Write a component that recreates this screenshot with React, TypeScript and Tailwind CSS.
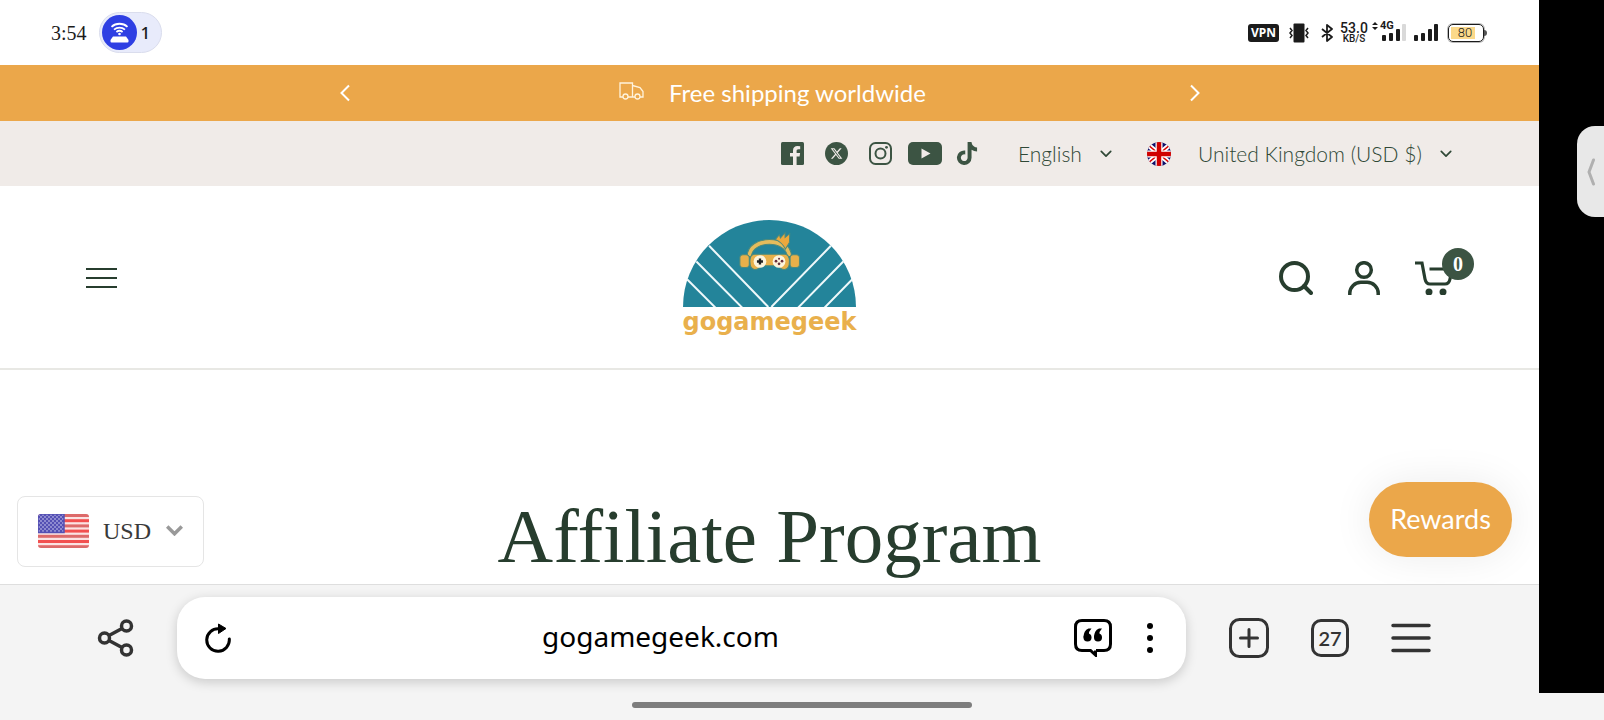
import { ReactNode } from "react";
import { FaTiktok, FaXTwitter } from "react-icons/fa6";

const BODY_FONT = "font-['Lato','Open_Sans',sans-serif]";

function Chevron({ className }: { className: string }) {
  return (
    <svg viewBox="0 0 14 9" className={className} fill="none" stroke="currentColor" strokeWidth="2">
      <path d="M1.5 1.5 7 7l5.5-5.5" strokeLinecap="round" strokeLinejoin="round" />
    </svg>
  );
}

function SignalBars({ weak }: { weak?: boolean }) {
  return (
    <svg viewBox="0 0 24 17" className="h-[17px] w-6" fill="#1b1b1b">
      <rect x="0" y="11" width="4" height="6" rx="1" />
      <rect x="7" y="9" width="4" height="8" rx="1" />
      <rect x="14" y="5" width="4" height="12" rx="1" />
      <rect x="20" y="0" width="4" height="17" rx="1" fill={weak ? "#d9d9d9" : "#1b1b1b"} />
    </svg>
  );
}

function StatusBar() {
  return (
    <div className="flex h-[65px] items-center justify-between bg-white pr-[52px] pl-[51px] text-[#1b1b1b]">
      <div className="flex items-center gap-3">
        <time className="font-['Liberation_Serif',serif] text-[20px] leading-6">3:54</time>
        <div className="flex h-[41px] w-[63px] items-center gap-1 rounded-full border border-[#dadded] bg-[#e8ebfb] pl-0.5 font-['Noto_Sans',sans-serif] text-[17px] font-medium">
          <svg viewBox="0 0 35 35" className="h-[35px] w-[35px]" fill="none">
            <circle cx="17.5" cy="17.5" r="17.5" fill="#2e3fe3" />
            <path d="M9.5 11.8a12 12 0 0 1 16 0M12 14.6a8.5 8.5 0 0 1 11 0M14.4 17a5 5 0 0 1 6.2 0" stroke="#fff" strokeWidth="1.8" />
            <circle cx="17.5" cy="19" r="1.3" fill="#fff" />
            <path d="M11 21.5h13l2.5 3.5v1.5q0 1-1 1h-16q-1 0-1-1V25z" fill="#fff" />
          </svg>
          <span>1</span>
        </div>
      </div>

      <div className="flex items-center">
        <span className="flex h-[18px] w-[31px] items-center justify-center rounded-[3px] bg-[#1b1b1b] font-['Noto_Sans',sans-serif] text-[12px] font-bold text-white">
          VPN
        </span>
        <svg viewBox="0 0 20 20" className="ml-2.5 h-5 w-5" fill="none" stroke="#1b1b1b" strokeWidth="1.5">
          <rect x="4.5" y="0.5" width="11" height="19" rx="1" fill="#1b1b1b" stroke="none" />
          <path d="m1 5 2 2.5L1 10l2 2.5L1 15M19 5l-2 2.5 2 2.5-2 2.5 2 2.5" />
        </svg>
        <svg viewBox="0 0 12 18" className="ml-3 h-[18px] w-3" fill="none" stroke="#1b1b1b" strokeWidth="1.8">
          <path d="m1 5 10 8-5 4V1l5 4L1 13" strokeLinejoin="round" />
        </svg>
        <div className="ml-[7px] flex w-7 flex-col items-center font-['Roboto',sans-serif] font-medium">
          <span className="text-[14px] leading-3">53.0</span>
          <span className="text-[10px] leading-[9px]">KB/S</span>
        </div>
        <div className="relative ml-3.5">
          <SignalBars weak />
          <span className="absolute -top-1 -left-2.5 flex items-center gap-0.5 font-['Roboto',sans-serif] text-[11px] leading-3 font-bold">
            <svg viewBox="0 0 6 8" className="h-2 w-1.5" fill="#1b1b1b">
              <path d="m3 0 3 3H0zM3 8l3-3H0z" />
            </svg>
            4G
          </span>
        </div>
        <div className="ml-2">
          <SignalBars />
        </div>
        <div className="ml-2.5 flex items-center">
          <span className="flex h-[18px] w-9 rounded-[5px] border border-[#1b1b1b] p-[2px] ring-1 ring-[#1b1b1b]/30">
            <span className="flex w-6 items-center justify-center bg-[#fbd98a] font-['Roboto',sans-serif] text-[13px] leading-3 font-light">
              <span className="pl-1">80</span>
            </span>
          </span>
          <span className="h-1.5 w-[3px] rounded-r-sm bg-[#555]" />
        </div>
      </div>
    </div>
  );
}

function Announcement() {
  return (
    <div className="flex h-14 items-center justify-center bg-[#eba74a] px-4 text-white">
      <div className="flex w-full max-w-[866px] items-center justify-between">
        <button aria-label="Previous" className="p-0.5">
          <svg viewBox="0 0 12 18" className="h-[18px] w-3" fill="none" stroke="currentColor" strokeWidth="2">
            <path d="M10 1.5 2.5 9l7.5 7.5" />
          </svg>
        </button>
        <div className="flex items-center gap-[25px] pl-1.5">
          <svg viewBox="0 0 25 18" className="-mt-1 h-[18px] w-[25px]" fill="none" stroke="#fff3dc" strokeWidth="1.3">
            <path d="M4 15H1V1h12.5v14H9M13.5 3.5l7.5 2 3 4V15h-3M13.5 15H16" />
            <circle cx="6.5" cy="14.5" r="2.5" />
            <circle cx="18.5" cy="14.5" r="2.5" />
          </svg>
          <p className={`text-[24px] leading-8 ${BODY_FONT}`}>Free shipping worldwide</p>
        </div>
        <button aria-label="Next" className="p-0.5">
          <svg viewBox="0 0 12 18" className="h-[18px] w-3" fill="none" stroke="currentColor" strokeWidth="2">
            <path d="M2 1.5 9.5 9 2 16.5" />
          </svg>
        </button>
      </div>
    </div>
  );
}

function SocialLink({ label, children }: { label: string; children: ReactNode }) {
  return (
    <a href="#" aria-label={label} className="block">
      {children}
    </a>
  );
}

function UtilityBar() {
  return (
    <div className={`flex h-[65px] items-center justify-end bg-[#f0ebe8] pr-[87px] text-[21px] text-[#2f4836] ${BODY_FONT}`}>
      <div className="flex items-center text-[#3c5443]">
        <SocialLink label="Facebook">
          <svg viewBox="0 0 23 23" className="h-[23px] w-[23px]" fill="currentColor">
            <rect width="23" height="23" rx="1.5" />
            <path d="M12 23v-8.500H9V11h3V8.500C12 5.500 13.700 4 16.500 4l2.700.2v3h-1.700c-1.500 0-1.900.7-1.900 1.800v2h3.500l-.5 3.500h-3V23z" fill="#f0ebe8" />
          </svg>
        </SocialLink>
        <span className="ml-[21px] flex">
          <SocialLink label="X">
            <span className="flex h-[23px] w-[23px] items-center justify-center rounded-full bg-[#3c5443] text-[#f0ebe8]">
              <FaXTwitter className="h-[13px] w-[13px]" />
            </span>
          </SocialLink>
        </span>
        <span className="ml-[21px] flex">
          <SocialLink label="Instagram">
            <svg viewBox="0 0 23 23" className="h-[23px] w-[23px]" fill="none" stroke="currentColor" strokeWidth="2">
              <rect x="1" y="1" width="21" height="21" rx="5.5" />
              <circle cx="11.5" cy="11.5" r="5" />
              <circle cx="17.5" cy="5.3" r="1.4" fill="currentColor" stroke="none" />
            </svg>
          </SocialLink>
        </span>
        <span className="ml-4 flex">
          <SocialLink label="YouTube">
            <svg viewBox="0 0 34 23" className="h-[23px] w-[34px]" fill="currentColor">
              <rect width="34" height="23" rx="5" />
              <path d="m13.500 6.500 9 5-9 5z" fill="#f0ebe8" />
            </svg>
          </SocialLink>
        </span>
        <span className="ml-3.5 flex">
          <SocialLink label="TikTok">
            <FaTiktok className="h-[23px] w-[22px]" />
          </SocialLink>
        </span>
      </div>

      <div className="relative ml-10 flex items-center">
        <select aria-label="Language" className="appearance-none bg-transparent pr-[30px] font-light">
          <option>English</option>
        </select>
        <Chevron className="pointer-events-none absolute right-0 h-2 w-3" />
      </div>

      <div className="relative ml-[35px] flex items-center gap-[27px]">
        <svg viewBox="0 0 24 24" className="h-6 w-6">
          <clipPath id="uk-round">
            <circle cx="12" cy="12" r="12" />
          </clipPath>
          <g clipPath="url(#uk-round)">
            <rect width="24" height="24" fill="#10106a" />
            <path d="M0 2 24 22M24 2 0 22" stroke="#fff" strokeWidth="5" />
            <path d="M0 2 24 22M24 2 0 22" stroke="#d80000" strokeWidth="1.5" />
            <path d="M12 0v24M0 12h24" stroke="#fff" strokeWidth="7" />
            <path d="M12 0v24M0 12h24" stroke="#d00000" strokeWidth="4.5" />
          </g>
        </svg>
        <select aria-label="Country" className="appearance-none bg-transparent pr-[30px] font-light">
          <option>United Kingdom (USD $)</option>
        </select>
        <Chevron className="pointer-events-none absolute right-0 h-2 w-3" />
      </div>
    </div>
  );
}

function Logo() {
  return (
    <a href="#" className="flex flex-col items-center">
      <svg viewBox="70 60 517 260" className="h-[87px] w-[173px]" aria-hidden="true">
        <path d="M70 320a258.500 260 0 0 1 517 0z" fill="#23849a" />
        <path
          d="M148 137 325 320M512 137 334 320M110 184l137 138M82 237l85 85M549 184 414 322M576 237l-83 85"
          fill="none"
          stroke="#eef8fa"
          strokeWidth="6"
        />
        <g stroke="#4c8a7c" strokeWidth="3">
          <path d="M262 168c0-66 132-66 132 0l-12 2c-4-50-104-50-108 0z" fill="#e5bc5c" />
          <path d="m346 118 12-14 3 10 14-16v14l14-11-1 26-12 20q-10-20-30-29z" fill="#eca83c" />
          <rect x="240" y="164" width="28" height="38" rx="9" fill="#e8b04a" />
          <rect x="390" y="164" width="28" height="38" rx="9" fill="#e8b04a" />
          <path d="M284 162h90q14 0 14 22t-14 24q-14 0-20-11h-50q-6 11-20 11-14-2-14-24t14-22z" fill="#e8b04a" />
        </g>
        <circle cx="300" cy="184" r="19" fill="#fdf4dc" />
        <circle cx="357" cy="184" r="19" fill="#fdf4dc" />
        <path d="M291 184h18M300 175v18" stroke="#222" strokeWidth="7" />
        <g fill="#6b2f3c">
          <circle cx="348" cy="183" r="4" />
          <circle cx="366" cy="183" r="4" />
          <circle cx="357" cy="191" r="4" />
          <circle cx="357" cy="176" r="3" />
        </g>
      </svg>
      <span className="font-['DejaVu_Sans',sans-serif] text-[24px] leading-[30px] font-bold text-[#e9b04c]">gogamegeek</span>
    </a>
  );
}

function Header() {
  return (
    <header className="grid h-[184px] grid-cols-[1fr_auto_1fr] items-center border-b-2 border-[#e8e8e4] bg-white px-[86px] pt-0.5 text-[#273d2e]">
      <button aria-label="Menu" className="justify-self-start">
        <svg viewBox="0 0 31 20" className="h-5 w-[31px]" stroke="currentColor" strokeWidth="2">
          <path d="M0 1h31M0 10h31M0 19h31" />
        </svg>
      </button>
      <Logo />
      <div className="flex items-center gap-[35px] justify-self-end">
        <button aria-label="Search">
          <svg viewBox="0 0 34 34" className="h-[34px] w-[34px]" fill="none" stroke="currentColor" strokeWidth="4">
            <circle cx="15.5" cy="15.5" r="13.5" />
            <path d="m25 25 7 7" strokeLinecap="round" />
          </svg>
        </button>
        <a href="#" aria-label="Account">
          <svg viewBox="0 0 32 34" className="h-[34px] w-8" fill="none" stroke="currentColor" strokeWidth="3.5">
            <circle cx="16" cy="9" r="7.3" />
            <path d="M1.800 34v-2a11 11 0 0 1 11-10.700h6.400a11 11 0 0 1 11 10.700v2" />
          </svg>
        </a>
        <a href="#" aria-label="Cart" className="relative">
          <svg viewBox="0 0 38 34" className="h-[34px] w-[38px]" fill="none" stroke="currentColor" strokeWidth="3.2">
            <path d="M0 2h7l3 16q1 5 5 5h15q4 0 5-5l2-10H14.500" />
            <circle cx="14" cy="31" r="3.5" fill="currentColor" stroke="none" />
            <circle cx="28" cy="31" r="3.5" fill="currentColor" stroke="none" />
          </svg>
          <span className="absolute -top-[13px] -right-[21px] flex h-8 w-8 items-center justify-center rounded-full bg-[#3c5443] font-['Liberation_Serif',serif] text-[20px] font-bold text-white">
            0
          </span>
        </a>
      </div>
    </header>
  );
}

function CurrencyWidget() {
  const stripes = [0, 1, 2, 3, 4, 5, 6];
  return (
    <div className="absolute bottom-[17px] left-[17px] flex h-[71px] w-[187px] items-center rounded-lg border border-[#e5e5e5] bg-white pb-0.5 pl-5">
      <svg viewBox="0 0 51 34" className="h-[34px] w-[51px]">
        <clipPath id="us-flag">
          <rect width="51" height="34" rx="3" />
        </clipPath>
        <g clipPath="url(#us-flag)">
          <rect width="51" height="34" fill="#fbe3e3" />
          {stripes.map((i) => (
            <rect key={i} y={i * 5.2} width="51" height="3" fill={i % 2 ? "#f25050" : "#dd6a6a"} />
          ))}
          <pattern id="us-stars" width="4" height="4" patternUnits="userSpaceOnUse">
            <rect width="4" height="4" fill="#5450b4" />
            <circle cx="1" cy="1" r="0.8" fill="#d5d4f5" />
            <circle cx="3" cy="3" r="0.8" fill="#d5d4f5" />
          </pattern>
          <rect width="26" height="18.5" fill="url(#us-stars)" stroke="#5450b4" strokeWidth="1.5" />
        </g>
      </svg>
      <select
        aria-label="Currency"
        className="ml-3.5 appearance-none bg-transparent pr-8 font-['Liberation_Serif',serif] text-[24px] text-[#3a3a3a]"
      >
        <option>USD</option>
      </select>
      <svg viewBox="0 0 17 11" className="pointer-events-none absolute right-5 h-[11px] w-[17px]" fill="none" stroke="#999" strokeWidth="3.5">
        <path d="m1.200 1.500 7.300 7.300 7.300-7.300" />
      </svg>
    </div>
  );
}

function BrowserBar() {
  return (
    <nav className="flex h-[109px] items-start border-t border-[#dedede] bg-[#f4f4f4] pt-3 pr-[108px] pl-[97px] text-[#333]">
      <button aria-label="Share" className="flex h-[82px] items-center">
        <svg viewBox="0 0 37 38" className="h-[38px] w-[37px]" fill="none" stroke="currentColor" strokeWidth="3.5">
          <circle cx="7.5" cy="19" r="5" />
          <circle cx="29.5" cy="7" r="5" />
          <circle cx="29.5" cy="31" r="5" />
          <path d="m12 16.500 13-7M12 21.500l13 7" />
        </svg>
      </button>
      <div className="ml-[43px] flex h-[82px] flex-1 items-center rounded-[28px] bg-white pr-8 pl-7 text-black shadow-[0_3px_12px_rgba(0,0,0,0.18)]">
        <button aria-label="Reload">
          <svg viewBox="0 0 26 30" className="h-[30px] w-[26px]" fill="none" stroke="currentColor" strokeWidth="3">
            <path d="M24.300 16A11.300 11.300 0 1 1 14 5.700" strokeLinecap="round" />
            <path d="M13.500 1v9.500L21 5.500z" fill="currentColor" strokeWidth="1" strokeLinejoin="round" />
          </svg>
        </button>
        <input
          type="text"
          aria-label="Address"
          defaultValue="gogamegeek.com"
          className="min-w-0 flex-1 bg-transparent pb-1 pl-4 text-center font-['Noto_Sans',sans-serif] text-[28px] outline-none"
        />
        <button aria-label="Quote">
          <svg viewBox="0 0 38 38" className="h-[38px] w-[38px]" fill="none" stroke="currentColor" strokeWidth="3">
            <path d="M22 31.500h8q6.500 0 6.500-6.500V8q0-6.500-6.500-6.500H8Q1.500 1.500 1.500 8v17q0 6.500 6.500 6.500h8.500l5 4.500v-4.500" />
            <g fill="currentColor" stroke="none">
              <circle cx="13.5" cy="18.5" r="4" />
              <circle cx="24" cy="18.5" r="4" />
              <path d="M9.500 18.500q0-7 5-9h3q-3 3-2.500 6zM20 18.500q0-7 5-9h3q-3 3-2.500 6z" />
            </g>
          </svg>
        </button>
        <button aria-label="More" className="ml-[34px]">
          <svg viewBox="0 0 8 30" className="h-[30px] w-2" fill="currentColor">
            <circle cx="4" cy="3" r="3" />
            <circle cx="4" cy="15" r="3" />
            <circle cx="4" cy="27" r="3" />
          </svg>
        </button>
      </div>
      <div className="ml-[43px] flex h-[82px] items-center gap-[42px]">
        <button aria-label="New tab">
          <svg viewBox="0 0 40 40" className="h-10 w-10" fill="none" stroke="currentColor" strokeWidth="3">
            <rect x="1.5" y="1.5" width="37" height="37" rx="9" />
            <path d="M20 11.500v17M11.500 20h17" strokeLinecap="round" />
          </svg>
        </button>
        <button
          aria-label="27 open tabs"
          className={`flex h-[38px] w-[38px] items-center justify-center rounded-[10px] border-3 border-[#333] text-[20px] leading-6 font-semibold ${BODY_FONT}`}
        >
          27
        </button>
        <button aria-label="Browser menu">
          <svg viewBox="0 0 40 30" className="h-[30px] w-10" stroke="currentColor" strokeWidth="3.5" strokeLinecap="round">
            <path d="M2 2.500h36M2 15h36M2 27.500h36" />
          </svg>
        </button>
      </div>
    </nav>
  );
}

export default function App() {
  return (
    <div className="flex min-h-screen flex-col bg-[#f4f4f4]">
      <div className="flex flex-1">
        <div className="flex min-w-0 flex-1 flex-col bg-white">
          <StatusBar />
          <Announcement />
          <UtilityBar />
          <Header />
          <main className="relative flex-1 overflow-hidden">
            <h1 className="pt-[126px] text-center font-['Liberation_Serif',serif] text-[77px] leading-20 text-[#273d2e]">
              Affiliate Program
            </h1>
            <CurrencyWidget />
            <button
              className={`absolute right-[27px] bottom-[27px] h-[75px] w-[143px] rounded-full bg-[#eba74a] text-[27px] text-white shadow-[0_0_40px_rgba(0,0,0,0.08)] ${BODY_FONT}`}
            >
              Rewards
            </button>
          </main>
          <BrowserBar />
        </div>
        <aside className="w-[65px] bg-black pt-[126px]">
          <button
            aria-label="Open side panel"
            className="ml-auto flex h-[91px] w-[27px] items-center justify-center rounded-l-[18px] bg-[#e8e8e8]"
          >
            <svg viewBox="0 0 8 28" className="h-7 w-2" fill="none" stroke="#b0b0b0" strokeWidth="3">
              <path d="M6.500 2 2 14l4.500 12" strokeLinecap="round" strokeLinejoin="round" />
            </svg>
          </button>
        </aside>
      </div>
      <div className="flex h-[27px] items-center justify-center pb-1">
        <span className="h-1.5 w-[340px] max-w-full rounded-full bg-[#7d7d7d]" />
      </div>
    </div>
  );
}
